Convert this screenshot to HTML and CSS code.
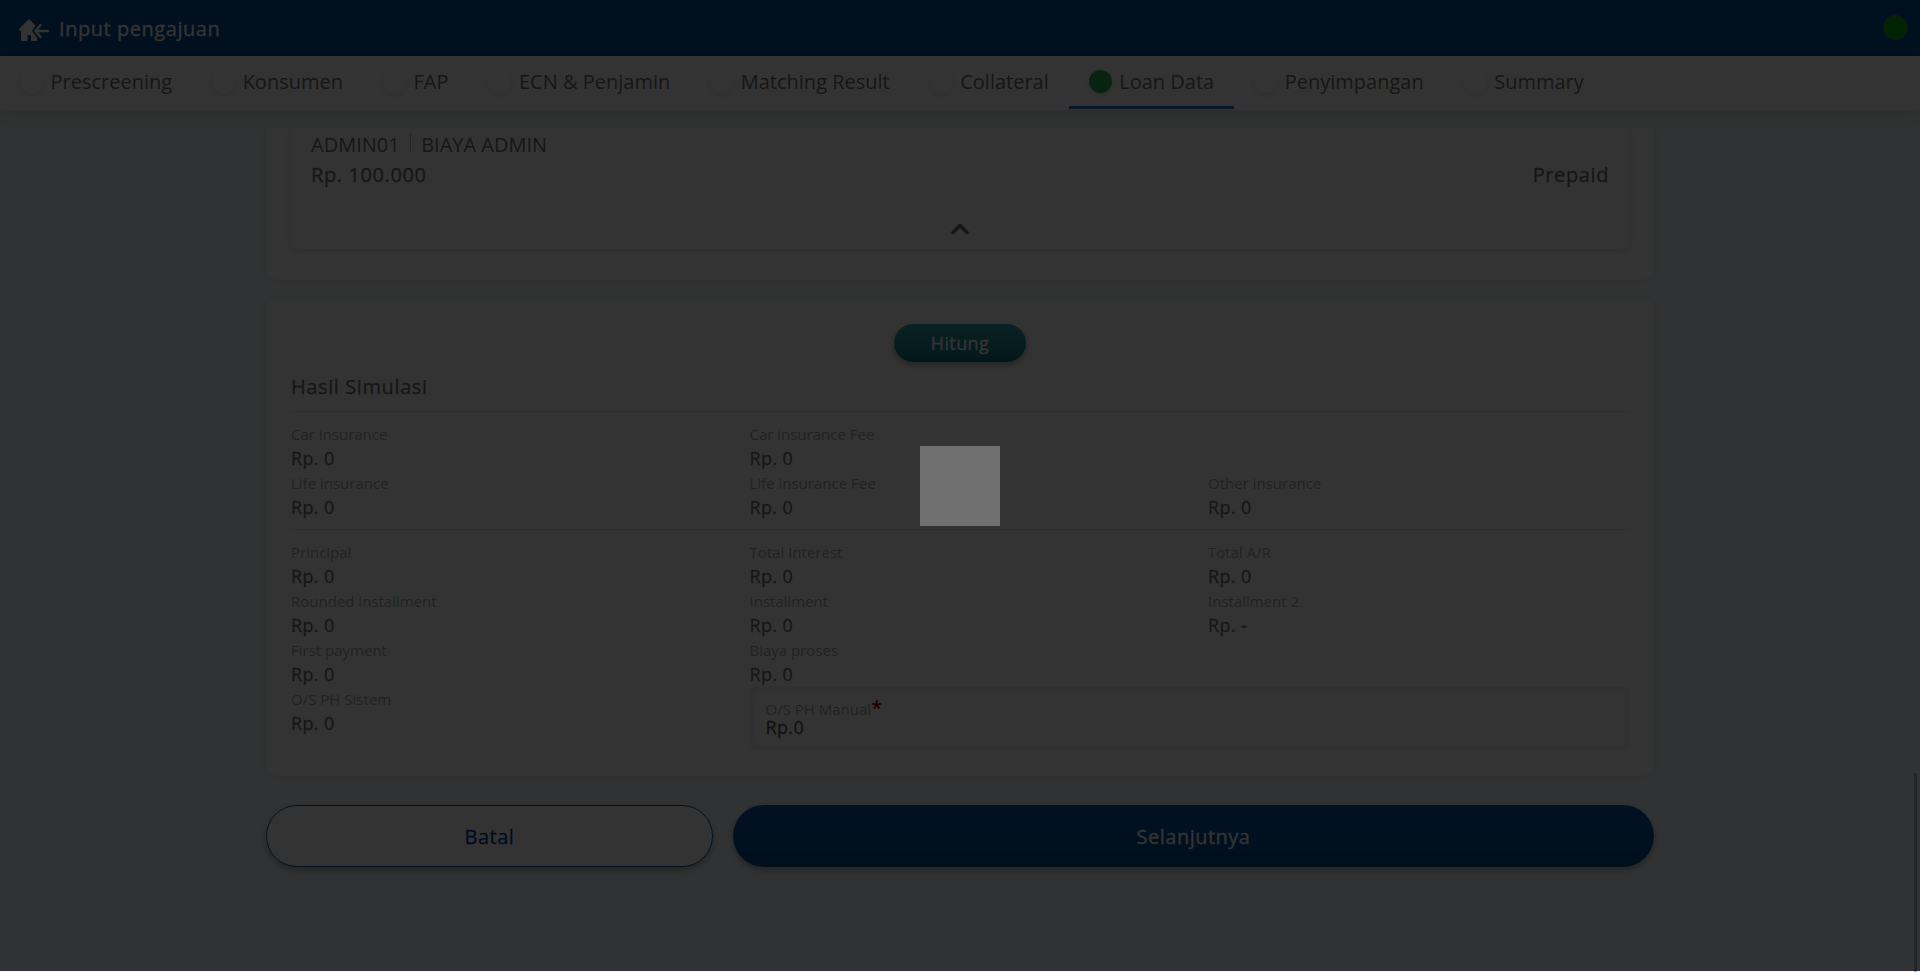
FILE: index.html
```html
<!DOCTYPE html>
<html lang="id">
<head>
<meta charset="utf-8">
<title>Input pengajuan</title>
<link rel="stylesheet" href="styles.css">
</head>
<body>
<div class="app">
  <header class="topbar">
    <svg class="home" width="32" height="26" viewBox="0 0 32 26"><path fill="#fff" stroke="#fff" stroke-width="1" stroke-linejoin="round" d="M1 11.500 L11 1.500 L17 7.500 L13.500 13 L18.500 19.500 V22.500 H13.500 V16.500 H9 V22.500 H3.500 V13 Z"/><path fill="none" stroke="#fff" stroke-width="2.500" stroke-linecap="round" stroke-linejoin="round" d="M22.500 7 L17.500 13 L22.500 19 M18.500 13 H30"/></svg>
    <h1 class="title">Input pengajuan</h1>
    <span class="online"></span>
  </header>
  <nav class="tabs">
    <a class="tab"><i class="dot"></i>Prescreening</a>
    <a class="tab"><i class="dot"></i>Konsumen</a>
    <a class="tab"><i class="dot"></i>FAP</a>
    <a class="tab"><i class="dot"></i>ECN &amp; Penjamin</a>
    <a class="tab"><i class="dot"></i>Matching Result</a>
    <a class="tab"><i class="dot"></i>Collateral</a>
    <a class="tab active"><i class="dot"></i>Loan Data</a>
    <a class="tab"><i class="dot"></i>Penyimpangan</a>
    <a class="tab"><i class="dot"></i>Summary</a>
  </nav>
  <main class="content">
    <section class="card fees">
      <div class="fee">
        <div class="fee-name"><span>ADMIN01</span><span class="sep"></span><span>BIAYA ADMIN</span></div>
        <div class="fee-row"><span>Rp. 100.000</span><span>Prepaid</span></div>
        <svg class="chevron" width="18" height="12" viewBox="0 0 18 12"><path d="M2 9.500 L9 2.500 L16 9.500"/></svg>
      </div>
    </section>
    <section class="card result">
      <button class="calc">Hitung</button>
      <h2 class="heading">Hasil Simulasi</h2>
      <div class="grid">
        <div class="item"><label>Car insurance</label><b>Rp. 0</b></div>
        <div class="item wide"><label>Car insurance Fee</label><b>Rp. 0</b></div>
        <div class="item"><label>Life insurance</label><b>Rp. 0</b></div>
        <div class="item"><label>Life insurance Fee</label><b>Rp. 0</b></div>
        <div class="item"><label>Other insurance</label><b>Rp. 0</b></div>
      </div>
      <div class="grid second">
        <div class="item"><label>Principal</label><b>Rp. 0</b></div>
        <div class="item"><label>Total Interest</label><b>Rp. 0</b></div>
        <div class="item"><label>Total A/R</label><b>Rp. 0</b></div>
        <div class="item"><label>Rounded installment</label><b>Rp. 0</b></div>
        <div class="item"><label>Installment</label><b>Rp. 0</b></div>
        <div class="item"><label>Installment 2</label><b>Rp. -</b></div>
        <div class="item"><label>First payment</label><b>Rp. 0</b></div>
        <div class="item wide"><label>Biaya proses</label><b>Rp. 0</b></div>
        <div class="item"><label>O/S PH Sistem</label><b>Rp. 0</b></div>
        <div class="field wide"><label>O/S PH Manual<em>*</em></label><b>Rp.0</b></div>
      </div>
    </section>
    <div class="actions">
      <button class="btn cancel">Batal</button>
      <button class="btn next">Selanjutnya</button>
    </div>
  </main>
  <span class="scrollbar"></span>
</div>
<div class="overlay"><div class="loader"></div></div>
</body>
</html>
```

FILE: styles.css
```css
* { box-sizing: border-box; }
body { margin: 0; background: #fff; font-family: "Open Sans", sans-serif; color: #707070; overflow: hidden; }
h1, h2 { margin: 0; font-weight: 500; }
button { font-family: inherit; border: 0; padding: 0; }
.title, .fee-row, .calc, .heading, .item b, .field b, .btn { -webkit-text-stroke: .28px currentColor; }
.app { position: relative; height: 972px; background: #f5f8fc; display: flex; flex-direction: column; }
.topbar { height: 56px; flex: none; background: #005096; display: flex; align-items: center; padding: 0 12px 0 18px; color: #fff; }
.home { margin-top: 6px; }
.title { margin: 2px 0 0 9px; font-size: 20px; line-height: 28px; letter-spacing: .55px; }
.online { margin: -2px 0 0 auto; width: 25px; height: 25px; border-radius: 50%; background: #00b400; border: 3px solid #289628; }
.tabs { position: relative; z-index: 2; height: 54px; flex: none; background: #fff; display: flex; box-shadow: 0 4px 16px rgba(0,0,0,.12); }
.tab { display: flex; align-items: center; height: 53px; padding: 0 20px; font-size: 20px; white-space: nowrap; border-bottom: 3px solid transparent; }
.dot { width: 23px; height: 23px; border-radius: 50%; background: #fff; margin-right: 7.500px; box-shadow: 0 2px 7px rgba(0,0,0,.12); }
.active { border-bottom-color: #2878d2; }
.active .dot { background: #28b450; }
.content { width: 1388px; margin: 20px auto 0; flex: 1; clip-path: inset(0 -20px); }
.card { background: #fff; box-shadow: 0 0 10px rgba(0,0,0,.06); border-radius: 0 0 10px 10px; }
.fees { height: 149px; padding: 0 25px; }
.fee { height: 119px; padding: 0 20px; border-radius: 0 0 6px 6px; box-shadow: 0 1px 8px rgba(0,0,0,.12); display: flex; flex-direction: column; }
.fee-name { display: flex; align-items: center; height: 29px; font-size: 20px; line-height: 28px; }
.sep { width: 1px; height: 20px; background: #bbb; margin: -3px 10.500px 0 10px; }
.fee-row { display: flex; justify-content: space-between; margin-top: 1px; font-size: 20px; line-height: 30px; font-weight: 500; letter-spacing: .6px; }
.chevron { align-self: center; margin-top: 33px; fill: none; stroke: #666; stroke-width: 3.5; stroke-linecap: round; stroke-linejoin: round; }
.result { margin-top: 20px; height: 476px; padding: 25px 25px 0; border-radius: 10px; }
.calc { display: block; margin: 0 auto; width: 132px; height: 38px; border-radius: 19px; background: linear-gradient(#2fa5ae, #147783); color: #fff; font-size: 18px; font-weight: 500; letter-spacing: .4px; box-shadow: 0 3px 6px rgba(0,0,0,.3); }
.heading { font-size: 20px; line-height: 30px; letter-spacing: .6px; margin-top: 10px; height: 40px; border-bottom: 1px solid #e4e4e4; }
.grid { display: grid; grid-template-columns: repeat(3, 458.500px); padding-top: 10px; width: 1338px; }
.second { margin-top: 9px; border-top: 1px solid #e4e4e4; }
.item { height: 49px; display: flex; flex-direction: column; }
.item label { font-size: 15px; line-height: 24px; color: #aaa; }
.item b, .field b { font-size: 18px; line-height: 24px; font-weight: 500; letter-spacing: .35px; }
.wide { grid-column: span 2; }
.field { width: 879px; height: 63px; border-radius: 6px; box-shadow: inset 0 0 10px rgba(0,0,0,.12); padding: 13px 16px; display: flex; flex-direction: column; }
.field label { font-size: 15px; line-height: 18px; color: #aaa; white-space: nowrap; }
.field b { line-height: 18px; color: #555; }
.field em { font-style: normal; font-size: 20px; line-height: 10px; font-weight: 600; color: #a00; }
.actions { display: flex; gap: 20px; margin-top: 30px; }
.btn { height: 62px; border-radius: 31px; font-size: 20px; font-weight: 500; letter-spacing: .5px; box-shadow: 0 3px 6px rgba(0,0,0,.3); }
.cancel { width: 447px; background: #fff; border: 1px solid #0a5aaf; color: #003c96; }
.next { flex: 1; background: linear-gradient(#0a5aaf, #004b8c); color: #fff; }
.scrollbar { position: absolute; right: 3px; top: 773px; width: 3px; height: 199px; background: #a5b9cd; }
.overlay { position: fixed; inset: 0 0 1px; z-index: 10; background: rgba(0,0,0,.8); display: flex; align-items: center; justify-content: center; }
.loader { width: 80px; height: 80px; background: #707070; }
```
